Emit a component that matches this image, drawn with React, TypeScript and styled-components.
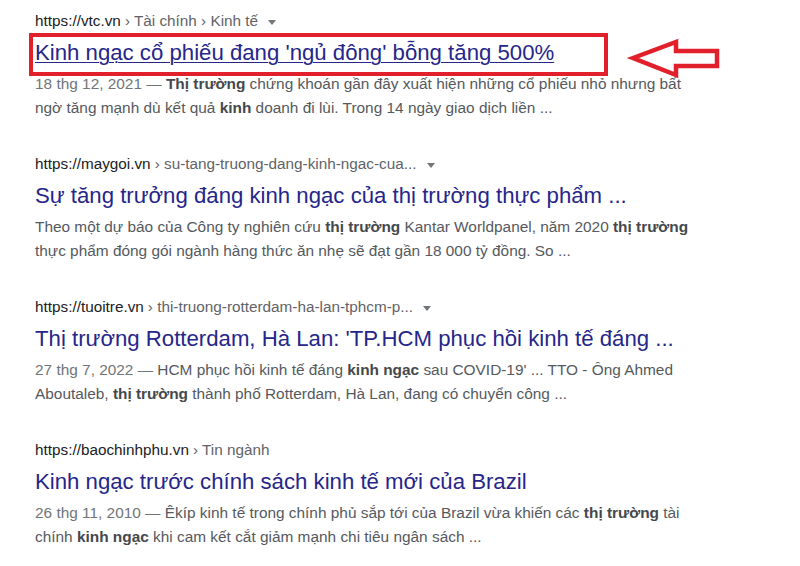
import React from "react";
import styled, { createGlobalStyle } from "styled-components";

type Part = { text: string; bold?: boolean; muted?: boolean };

type Result = {
  site: string;
  crumbs: string;
  title: string;
  underline?: boolean;
  caret?: boolean;
  lines: Part[][];
};

const results: Result[] = [
  {
    site: "https://vtc.vn",
    crumbs: "› Tài chính › Kinh tế",
    title: "Kinh ngạc cổ phiếu đang 'ngủ đông' bỗng tăng 500%",
    underline: true,
    caret: true,
    lines: [
      [
        { text: "18 thg 12, 2021 — ", muted: true },
        { text: "Thị trường", bold: true },
        { text: " chứng khoán gần đây xuất hiện những cổ phiếu nhỏ nhưng bất" },
      ],
      [
        { text: "ngờ tăng mạnh dù kết quả " },
        { text: "kinh", bold: true },
        { text: " doanh đi lùi. Trong 14 ngày giao dịch liền ..." },
      ],
    ],
  },
  {
    site: "https://maygoi.vn",
    crumbs: "› su-tang-truong-dang-kinh-ngac-cua...",
    title: "Sự tăng trưởng đáng kinh ngạc của thị trường thực phẩm ...",
    caret: true,
    lines: [
      [
        { text: "Theo một dự báo của Công ty nghiên cứu " },
        { text: "thị trường", bold: true },
        { text: " Kantar Worldpanel, năm 2020 " },
        { text: "thị trường", bold: true },
      ],
      [{ text: "thực phẩm đóng gói ngành hàng thức ăn nhẹ sẽ đạt gần 18 000 tỷ đồng. So ..." }],
    ],
  },
  {
    site: "https://tuoitre.vn",
    crumbs: "› thi-truong-rotterdam-ha-lan-tphcm-p...",
    title: "Thị trường Rotterdam, Hà Lan: 'TP.HCM phục hồi kinh tế đáng ...",
    caret: true,
    lines: [
      [
        { text: "27 thg 7, 2022 — ", muted: true },
        { text: "HCM phục hồi kinh tế đáng " },
        { text: "kinh ngạc", bold: true },
        { text: " sau COVID-19' ... TTO - Ông Ahmed" },
      ],
      [
        { text: "Aboutaleb, " },
        { text: "thị trường", bold: true },
        { text: " thành phố Rotterdam, Hà Lan, đang có chuyển công ..." },
      ],
    ],
  },
  {
    site: "https://baochinhphu.vn",
    crumbs: "› Tin ngành",
    title: "Kinh ngạc trước chính sách kinh tế mới của Brazil",
    lines: [
      [
        { text: "26 thg 11, 2010 — ", muted: true },
        { text: "Êkíp kinh tế trong chính phủ sắp tới của Brazil vừa khiến các " },
        { text: "thị trường", bold: true },
        { text: " tài" },
      ],
      [
        { text: "chính " },
        { text: "kinh ngạc", bold: true },
        { text: " khi cam kết cắt giảm mạnh chi tiêu ngân sách ..." },
      ],
    ],
  },
];

const GlobalStyle = createGlobalStyle`
  html, body {
    margin: 0;
    padding: 0;
    background: #ffffff;
  }
  body {
    font-family: "Liberation Sans", Arial, sans-serif;
  }
`;

const Page = styled.div`
  position: relative;
  width: 800px;
  height: 566px;
  overflow: hidden;
  box-sizing: border-box;
  padding: 9px 0 0 35px;
  background: #ffffff;
`;

const ResultList = styled.div`
  display: flex;
  flex-direction: column;
  gap: 32px;
`;

const ResultBlock = styled.div`
  display: flex;
  flex-direction: column;
`;

const UrlRow = styled.div`
  display: flex;
  align-items: center;
  height: 24px;
  font-size: 15.3px;
  color: #202124;
  white-space: nowrap;
`;

const Crumbs = styled.span`
  padding-left: 4px;
  color: #5f6368;
`;

const Caret = styled.span`
  display: inline-block;
  margin-left: 10px;
  margin-top: 2px;
  width: 0;
  height: 0;
  border-left: 4px solid transparent;
  border-right: 4px solid transparent;
  border-top: 5px solid #70757a;
`;

const Title = styled.a<{ $underline?: boolean }>`
  display: block;
  margin-top: 5px;
  font-size: 22.2px;
  line-height: 30px;
  color: #26268a;
  text-decoration: ${(p) => (p.$underline ? "underline" : "none")};
  text-underline-offset: 2px;
  text-decoration-thickness: 1px;
  white-space: nowrap;
`;

const Snippet = styled.div`
  margin-top: 4px;
  font-size: 15.4px;
  line-height: 24px;
  color: #55595e;
  white-space: nowrap;
`;

const Chunk = styled.span<{ $bold?: boolean; $muted?: boolean }>`
  font-weight: ${(p) => (p.$bold ? 700 : 400)};
  color: ${(p) => (p.$bold ? "#45484c" : p.$muted ? "#70757a" : "inherit")};
`;

const HighlightBox = styled.div`
  position: absolute;
  left: 29px;
  top: 33px;
  width: 579px;
  height: 43px;
  box-sizing: border-box;
  border: 4.5px solid #e2202b;
  pointer-events: none;
`;

const ArrowMark = styled.svg`
  position: absolute;
  left: 624px;
  top: 34px;
  width: 100px;
  height: 48px;
  overflow: visible;
`;

const App: React.FC = () => {
  return (
    <>
      <GlobalStyle />
      <Page>
        <ResultList>
          {results.map((r) => (
            <ResultBlock key={r.site}>
              <UrlRow>
                <span>{r.site}</span>
                <Crumbs>{r.crumbs}</Crumbs>
                {r.caret && <Caret />}
              </UrlRow>
              <Title href="#" $underline={r.underline}>
                {r.title}
              </Title>
              <Snippet>
                {r.lines.map((line, i) => (
                  <div key={i}>
                    {line.map((part, j) => (
                      <Chunk key={j} $bold={part.bold} $muted={part.muted}>
                        {part.text}
                      </Chunk>
                    ))}
                  </div>
                ))}
              </Snippet>
            </ResultBlock>
          ))}
        </ResultList>
        <HighlightBox />
        <ArrowMark viewBox="624 34 100 48">
          <polygon
            points="633,58 676,42 676,51 717,51 717,66 676,66 676,75"
            fill="none"
            stroke="#e2202b"
            strokeWidth="4.5"
            strokeLinejoin="miter"
          />
        </ArrowMark>
      </Page>
    </>
  );
};

export default App;
